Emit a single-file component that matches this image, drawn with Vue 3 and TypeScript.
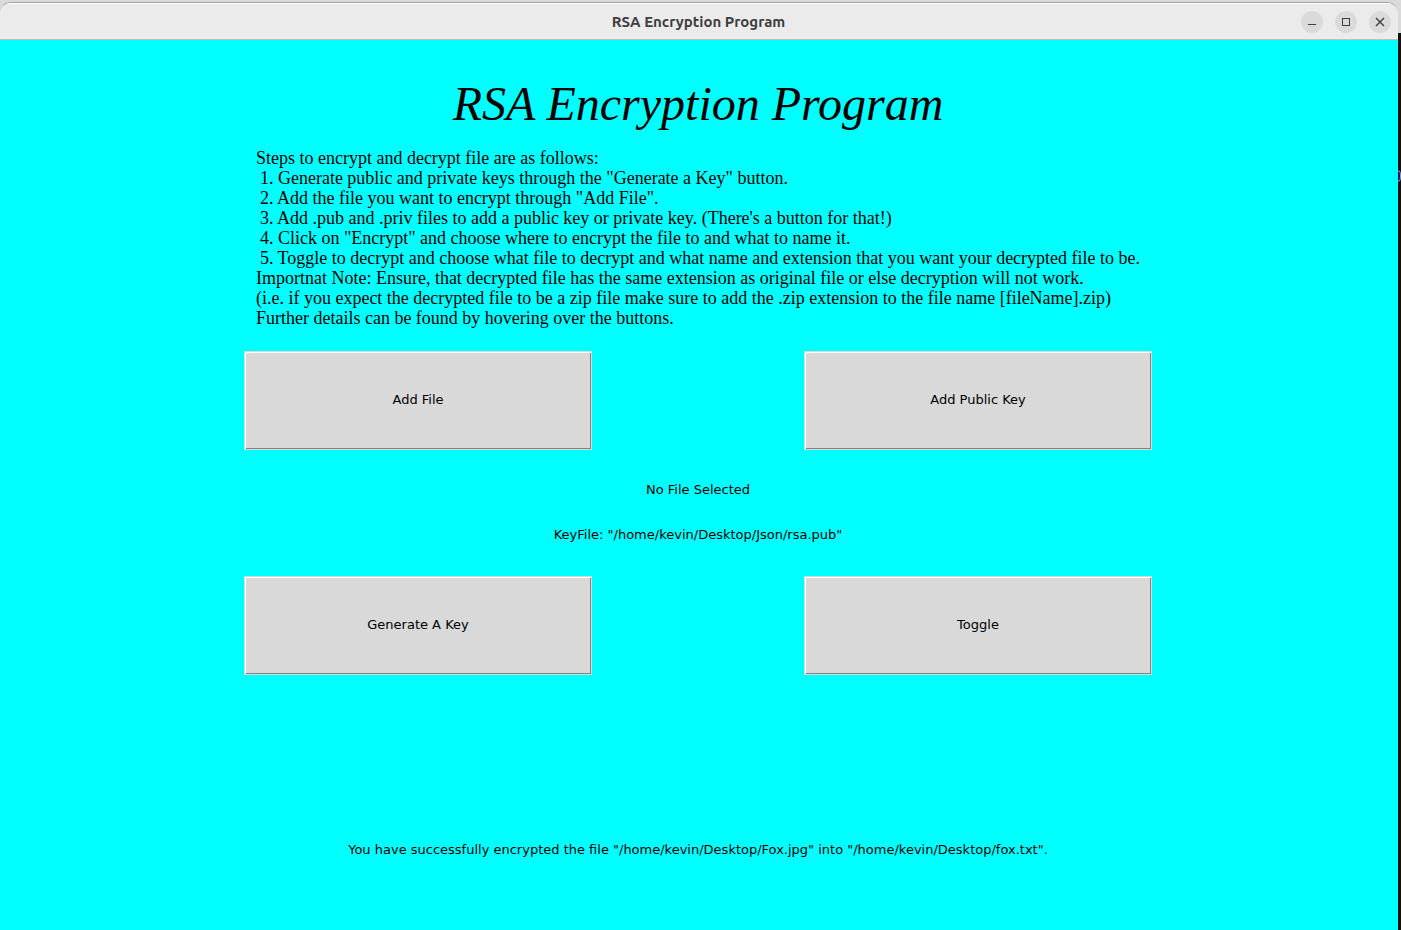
<script setup lang="ts">
import { ref } from 'vue'

const steps: string[] = [
  'Generate public and private keys through the "Generate a Key" button.',
  'Add the file you want to encrypt through "Add File".',
  "Add .pub and .priv files to add a public key or private key. (There's a button for that!)",
  'Click on "Encrypt" and choose where to encrypt the file to and what to name it.',
  'Toggle to decrypt and choose what file to decrypt and what name and extension that you want your decrypted file to be.',
]

const fileStatus = ref('No File Selected')
const keyStatus = ref('KeyFile: "/home/kevin/Desktop/Json/rsa.pub"')
const result = ref(
  'You have successfully encrypted the file "/home/kevin/Desktop/Fox.jpg" into "/home/kevin/Desktop/fox.txt".',
)
</script>

<template>
  <div class="desktop">
    <div class="window">
      <header class="titlebar">
        <span class="caption">RSA Encryption Program</span>
        <div class="controls">
          <button type="button" class="control" aria-label="Minimize">
            <svg viewBox="0 0 22 22" shape-rendering="crispEdges"><path d="M7 13.5H15" /></svg>
          </button>
          <button type="button" class="control" aria-label="Maximize">
            <svg viewBox="0 0 22 22" shape-rendering="crispEdges"><path d="M7.5 7.5H14.5V14.5H7.5Z" /></svg>
          </button>
          <button type="button" class="control" aria-label="Close">
            <svg viewBox="0 0 22 22"><path class="cross" d="M7 7L15 15M15 7L7 15" /></svg>
          </button>
        </div>
      </header>

      <main class="content">
        <h1 class="heading">RSA Encryption Program</h1>

        <section class="instructions">
          <p>Steps to encrypt and decrypt file are as follows:</p>
          <ol>
            <li v-for="(step, i) in steps" :key="i">{{ i + 1 }}. {{ step }}</li>
          </ol>
          <p>Importnat Note: Ensure, that decrypted file has the same extension as original file or else decryption will not work.</p>
          <p>(i.e. if you expect the decrypted file to be a zip file make sure to add the .zip extension to the file name [fileName].zip)</p>
          <p>Further details can be found by hovering over the buttons.</p>
        </section>

        <div class="actions">
          <button type="button" class="action">Add File</button>
          <button type="button" class="action">Add Public Key</button>
        </div>

        <div class="status">
          <p>{{ fileStatus }}</p>
          <p>{{ keyStatus }}</p>
        </div>

        <div class="actions">
          <button type="button" class="action">Generate A Key</button>
          <button type="button" class="action">Toggle</button>
        </div>

        <p class="result" role="status">{{ result }}</p>
      </main>
    </div>
    <svg class="backdrop-edge" viewBox="0 0 3 12" aria-hidden="true">
      <path d="M0 1H1.5Q2.5 2 2.5 6T1.5 11H0" />
    </svg>
  </div>
</template>

<style>
html,
body,
#app {
  height: 100%;
}
body {
  margin: 0;
}
</style>

<style scoped>
.desktop {
  box-sizing: border-box;
  min-height: 100%;
  display: flex;
  padding-top: 2px;
  background: linear-gradient(#dadada 33px, #111111 33px);
}
.backdrop-edge {
  flex: none;
  width: 3px;
  height: 12px;
  margin-top: 168px;
  fill: #0c1830;
  stroke: #7fa9d6;
  stroke-width: 1;
}
.window {
  flex: 1;
  min-width: 0;
  display: flex;
  flex-direction: column;
  border-top: 1px solid #a3a3a3;
  border-radius: 11px 11px 0 0;
  overflow: hidden;
  background: #ebebeb;
}
.titlebar {
  box-sizing: border-box;
  height: 37px;
  display: grid;
  grid-template-columns: 1fr auto 1fr;
  align-items: center;
  padding-right: 7px;
  padding-left: 6px;
  border-top: 1px solid #ffffff;
  border-bottom: 1px solid #bfbfbf;
  background: #ebebeb;
}
.caption {
  grid-column: 2;
  color: #3d3d3d;
  font: bold 15px/20px Ubuntu, 'Noto Sans', sans-serif;
}
.controls {
  display: flex;
  justify-content: flex-end;
  gap: 12px;
}
.control {
  width: 22px;
  height: 22px;
  padding: 0;
  border: 0;
  border-radius: 50%;
  background: #dadada;
}
.control svg {
  display: block;
  width: 22px;
  height: 22px;
  fill: none;
  stroke: #3d3d3d;
  stroke-width: 1;
}
.control .cross {
  stroke-width: 1.4;
}
.content {
  flex: 1;
  display: flex;
  flex-direction: column;
  align-items: center;
  padding: 36px 2px 70px 0;
  background: #00ffff;
  color: #000000;
  font: 13px/20px 'DejaVu Sans', sans-serif;
}
.heading {
  margin: 0;
  font: italic 48px/56px Z003, 'URW Chancery L', 'Liberation Serif', serif;
}
p,
ol {
  margin: 0;
  padding: 0;
}
.instructions {
  margin-top: 16px;
  font: 18px/20px 'Liberation Serif', serif;
}
ol {
  padding-left: 4px;
  list-style: none;
}
.actions {
  display: flex;
  flex-wrap: wrap;
  justify-content: center;
  gap: 24px 212px;
  margin-top: 23px;
}
.action {
  width: 348px;
  height: 99px;
  padding: 0 0 2px;
  border: 1px solid #d9d9d9;
  border-radius: 0;
  background: #d9d9d9;
  box-shadow: inset 1px 1px #ffffff, inset -1px -1px #828282;
  color: #000000;
  font: inherit;
}
.status {
  display: grid;
  gap: 25px;
  margin: 30px 0 8px;
  text-align: center;
}
.result {
  margin-top: auto;
}
</style>
